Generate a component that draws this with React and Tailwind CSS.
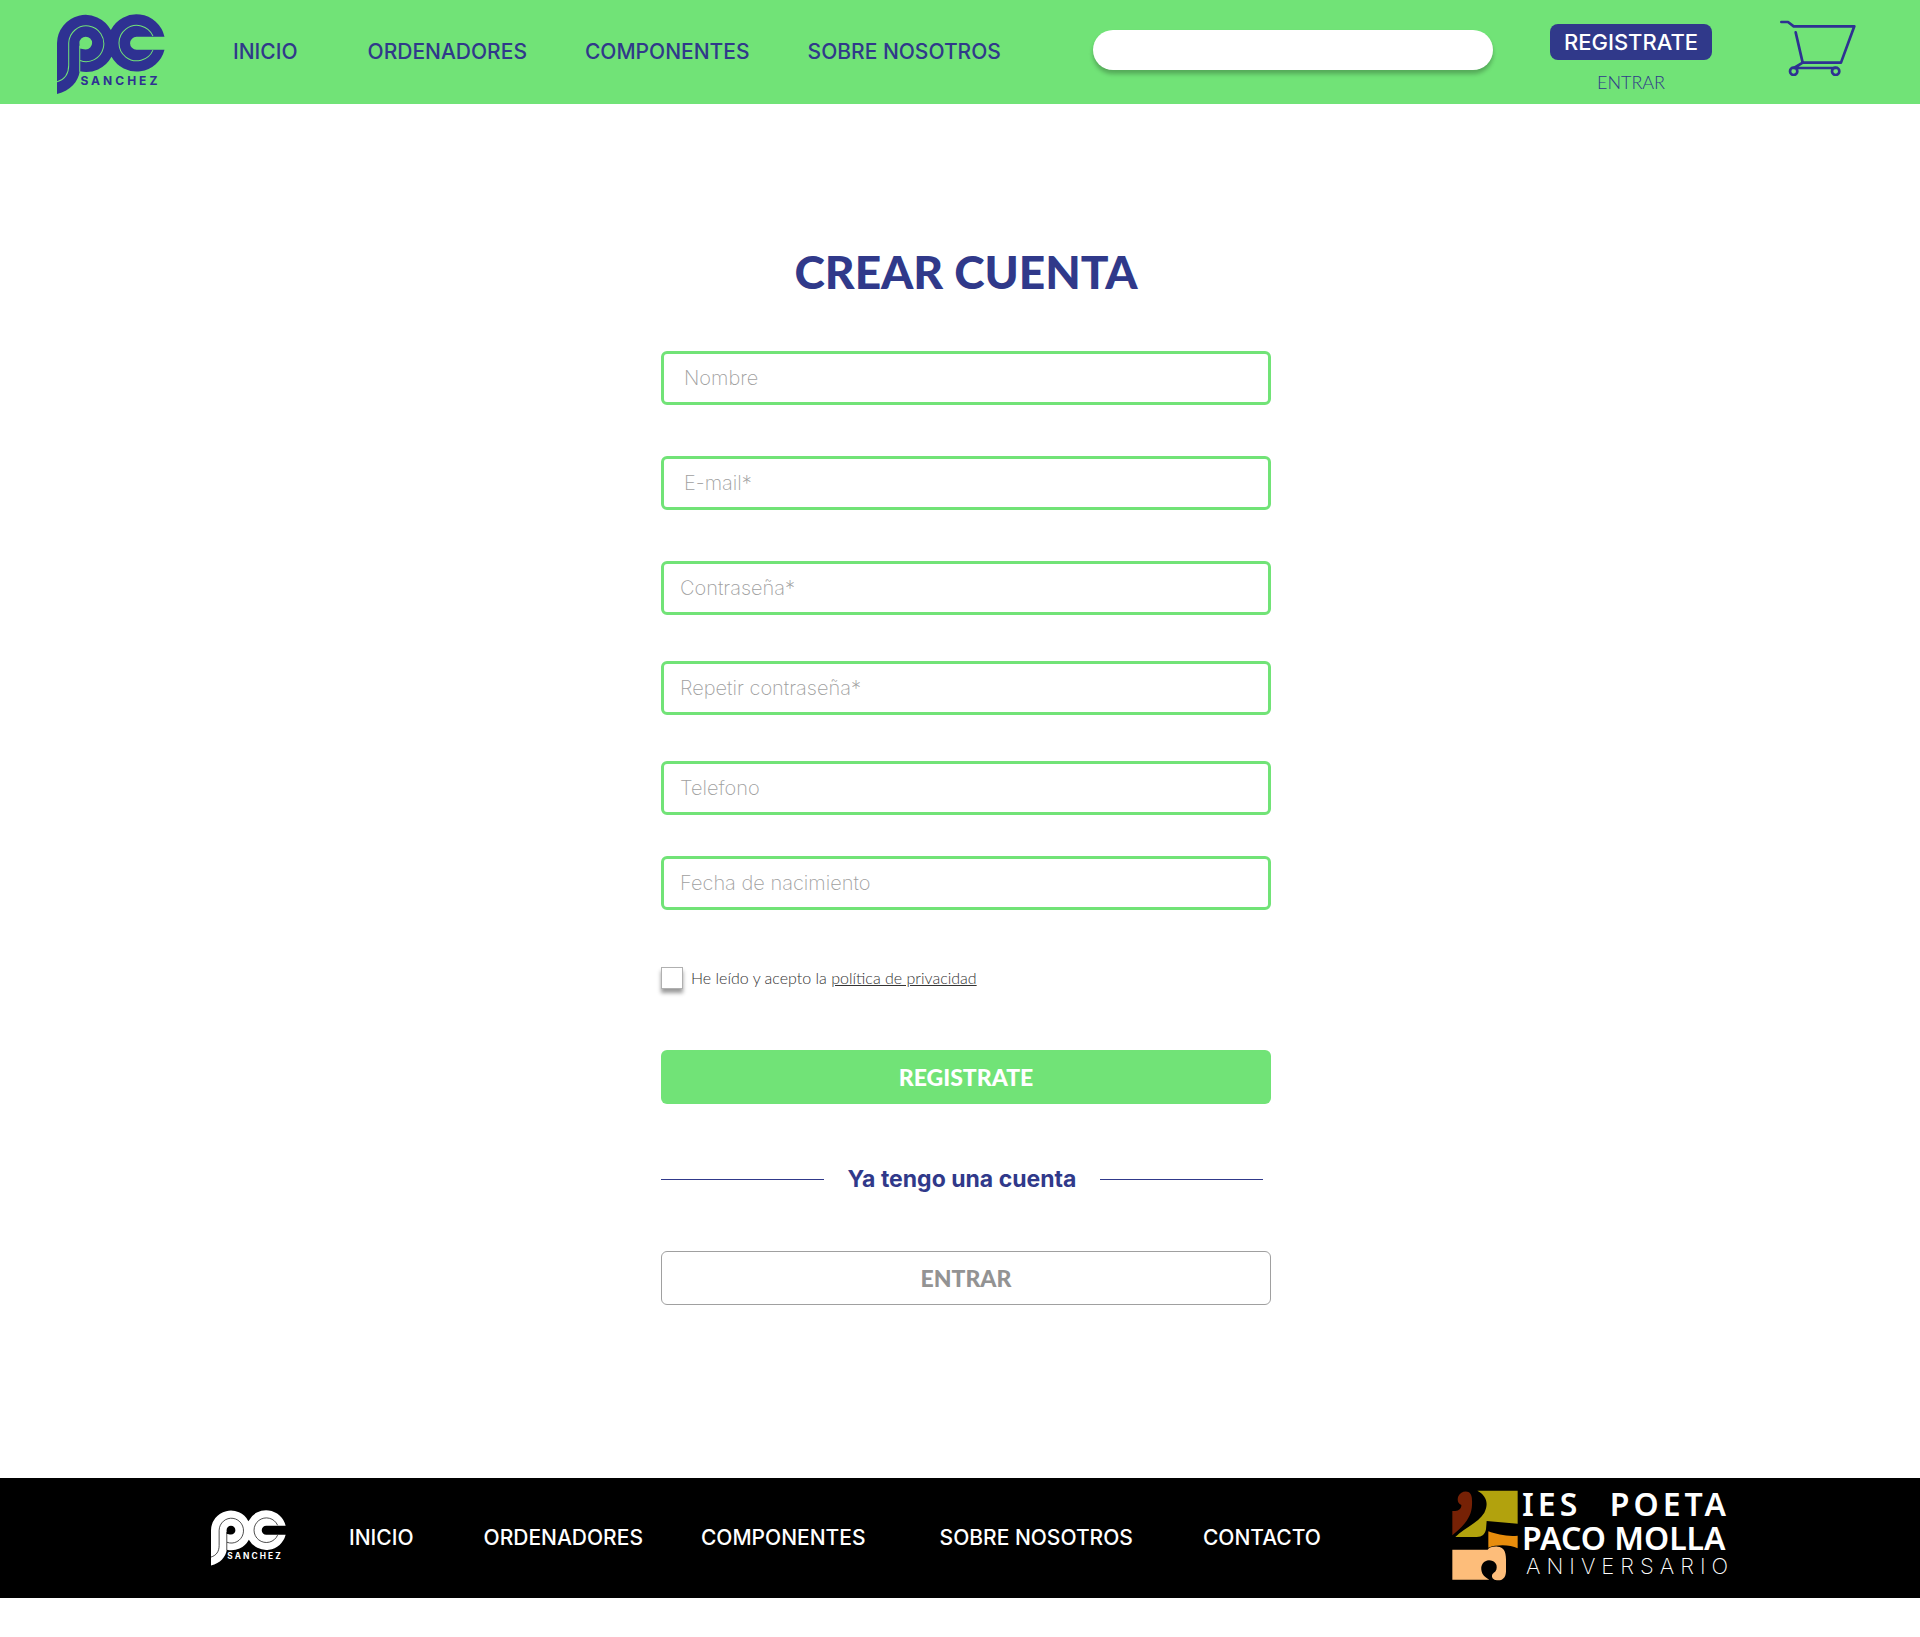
import React from "react";

const NAV = [
  { label: "INICIO", space: "mr-3" },
  { label: "ORDENADORES", space: "" },
  { label: "COMPONENTES", space: "" },
  { label: "SOBRE NOSOTROS", space: "" },
];

const FIELDS = [
  { id: "nombre", label: "Nombre", type: "text", space: "mt-[55px]", pad: "px-5" },
  { id: "email", label: "E-mail*", type: "email", space: "mt-[51px]", pad: "px-5" },
  { id: "contrasena", label: "Contraseña*", type: "password", space: "mt-[51px]", pad: "px-4" },
  { id: "repetir", label: "Repetir contraseña*", type: "password", space: "mt-[46px]", pad: "px-4" },
  { id: "telefono", label: "Telefono", type: "tel", space: "mt-[46px]", pad: "px-4" },
  { id: "fecha", label: "Fecha de nacimiento", type: "text", space: "mt-[41px]", pad: "px-4" },
];

function Logo({ className, lineClass, holeClass }) {
  return (
    <svg viewBox="53 43 323 240" className={className} role="img" aria-label="PC Sanchez" fill="currentColor">
      <path d="M53 130A85.500 85.500 0 0 1 214 91A86 86 0 0 1 374.500 111H291A19.500 19.500 0 0 0 291 150H374.500A86 86 0 0 1 216 171A85.500 85.500 0 0 1 121 214C116 246 94 271 53 282Z" />
      <g fill="none" strokeWidth="3" className={lineClass}>
        <path d="M340 109A53 53 0 1 0 340 151" />
        <path d="M52 246C76 239 88 222 88 196V130A52.500 53.500 0 1 1 122 182" />
        <path d="M121 138V216" />
      </g>
      <path d="M120 130A19 19 0 1 1 139 149C131 149 127 146 121 146Z" className={holeClass} />
      <text x="123" y="254" fontSize="36" fontWeight="700" letterSpacing="9" fontFamily="Inter, sans-serif">
        SANCHEZ
      </text>
    </svg>
  );
}

function Cart() {
  return (
    <svg viewBox="62 60 228 170" className="w-[76px]" fill="none" stroke="currentColor" strokeWidth="8" strokeLinecap="round" strokeLinejoin="round" aria-hidden="true">
      <path d="M66 66H86L103 79H285L245 188H130L109 97" />
      <path d="M130 188L104 204H229" />
      <circle cx="103" cy="214" r="11" />
      <circle cx="229" cy="214" r="11" />
    </svg>
  );
}

function Anniversary() {
  return (
    <a href="#ies" className="flex shrink-0 items-end gap-1 pb-2 text-white">
      <svg viewBox="21 17 198 272" className="w-[66px]" aria-hidden="true">
        <path fill="#762105" d="M22 80C34 82 50 76 49 62C38 58 36 46 40 36C46 22 62 18 72 24C80 30 82 40 81 62C80 95 62 120 22 153Z" />
        <path fill="#b2a20d" d="M97 19H218V118L125 110L123 135C120 150 112 158 95 158H31C60 130 100 115 118 85C133 55 122 32 97 19Z" />
        <path fill="#e88d0c" d="M130 141C155 150 190 158 218 154V192C195 180 155 180 130 190Z" />
        <path fill="#fdbd7a" d="M22 196H128C132 189 145 186 158 187C175 188 183 200 183 225V262C182 280 172 288 160 288C148 288 140 282 141 274C142 265 150 266 154 256C159 240 148 228 132 228C116 229 107 242 109 256C111 272 120 278 133 286H22Z" />
      </svg>
      <p className="w-[208px] pb-1 font-['Noto_Sans',sans-serif] text-[32px] leading-[34px] font-semibold whitespace-nowrap">
        <span className="flex justify-between tracking-[4px]">
          <span>IES</span> <span>POETA</span>
        </span>
        PACO MOLLA
        <span className="block pl-1 font-[Inter,sans-serif] text-[22px] leading-[22px] font-extralight tracking-[6px]">ANIVERSARIO</span>
      </p>
    </a>
  );
}

function NavLinks({ items }) {
  return items.map((n) => (
    <a key={n.label} href={"#" + n.label.toLowerCase().replace(" ", "-")} className={"whitespace-nowrap " + n.space}>
      {n.label}
    </a>
  ));
}

export default function App() {
  return (
    <div className="bg-white pb-[39px] font-[Lato,sans-serif]">
      <header className="flex min-h-[104px] items-center bg-[#71e377] pr-16 pl-[57px] text-[#30398a]">
        <a href="#inicio" className="mr-[68px] shrink-0 pt-1">
          <Logo className="w-[108px] text-[#2e3192]" lineClass="stroke-[#71e377]" holeClass="fill-[#71e377]" />
        </a>
        <nav className="flex gap-[58px] font-[Inter,sans-serif] text-[21px] leading-6 font-medium">
          <NavLinks items={NAV} />
        </nav>
        <input type="search" aria-label="Buscar" className="mb-1 ml-auto h-10 w-[400px] min-w-0 rounded-full bg-white px-5 text-xl shadow-[0_4px_4px_rgba(0,0,0,0.25)] outline-none" />
        <div className="ml-[57px] flex shrink-0 flex-col items-center pt-3">
          <button type="button" className="h-9 w-[162px] rounded-lg bg-[#30398a] font-[Inter,sans-serif] text-[22px] leading-6 font-medium text-white">
            REGISTRATE
          </button>
          <a href="#entrar" className="mt-3 text-lg leading-5 font-light">ENTRAR</a>
        </div>
        <a href="#carrito" aria-label="Carrito" className="mb-2 ml-[68px] shrink-0 text-[#2e3192]">
          <Cart />
        </a>
      </header>

      <main className="pt-[144px] pb-[173px] pl-3">
        <form className="mx-auto w-full max-w-[610px]" onSubmit={(e) => e.preventDefault()}>
          <h1 className="text-center text-[46px] leading-[48px] font-black text-[#30398a]">CREAR CUENTA</h1>
          {FIELDS.map((f) => (
            <input
              key={f.id}
              id={f.id}
              type={f.type}
              aria-label={f.label}
              placeholder={f.label}
              className={"block h-[54px] w-full rounded-md border-3 border-[#71e377] bg-white font-[Inter,sans-serif] text-xl font-extralight text-gray-700 outline-none placeholder:text-[#a0a0a0] " + f.space + " " + f.pad}
            />
          ))}
          <div className="mt-14 flex items-center gap-2">
            <input id="privacidad" type="checkbox" className="size-[22px] appearance-none border border-[#b0b0b0] bg-white shadow-[0_4px_4px_rgba(0,0,0,0.4)]" />
            <label htmlFor="privacidad" className="pt-px text-base leading-[22px] font-light text-[#333]">
              He leído y acepto la <a href="#privacidad" className="underline">política de privacidad</a>
            </label>
          </div>
          <button type="submit" className="mt-[61px] h-[54px] w-full rounded-md bg-[#71e377] text-[23px] font-black text-white">
            REGISTRATE
          </button>
          <div className="mt-[59px] flex items-center gap-6 pr-2 text-[#30398a]">
            <span className="h-px flex-1 bg-current" />
            <h2 className="font-[Inter,sans-serif] text-[23px] leading-[33px] font-bold">Ya tengo una cuenta</h2>
            <span className="h-px flex-1 bg-current" />
          </div>
          <button type="button" className="mt-[55px] h-[54px] w-full rounded-md border border-[#a0a0a0] bg-white text-[23px] font-black text-[#939393]">
            ENTRAR
          </button>
        </form>
      </main>

      <footer className="flex min-h-[120px] items-center bg-black pr-[190px] pl-[211px] text-white">
        <a href="#inicio" className="mr-[63px] shrink-0">
          <Logo className="w-[75px]" lineClass="stroke-black" holeClass="fill-black" />
        </a>
        <nav className="flex gap-[58px] font-[Inter,sans-serif] text-[21px] leading-6 font-medium">
          <NavLinks items={[...NAV.slice(0, 3), { label: "SOBRE NOSOTROS", space: "ml-4 mr-3" }, { label: "CONTACTO", space: "" }]} />
        </nav>
        <div className="ml-auto">
          <Anniversary />
        </div>
      </footer>
    </div>
  );
}
